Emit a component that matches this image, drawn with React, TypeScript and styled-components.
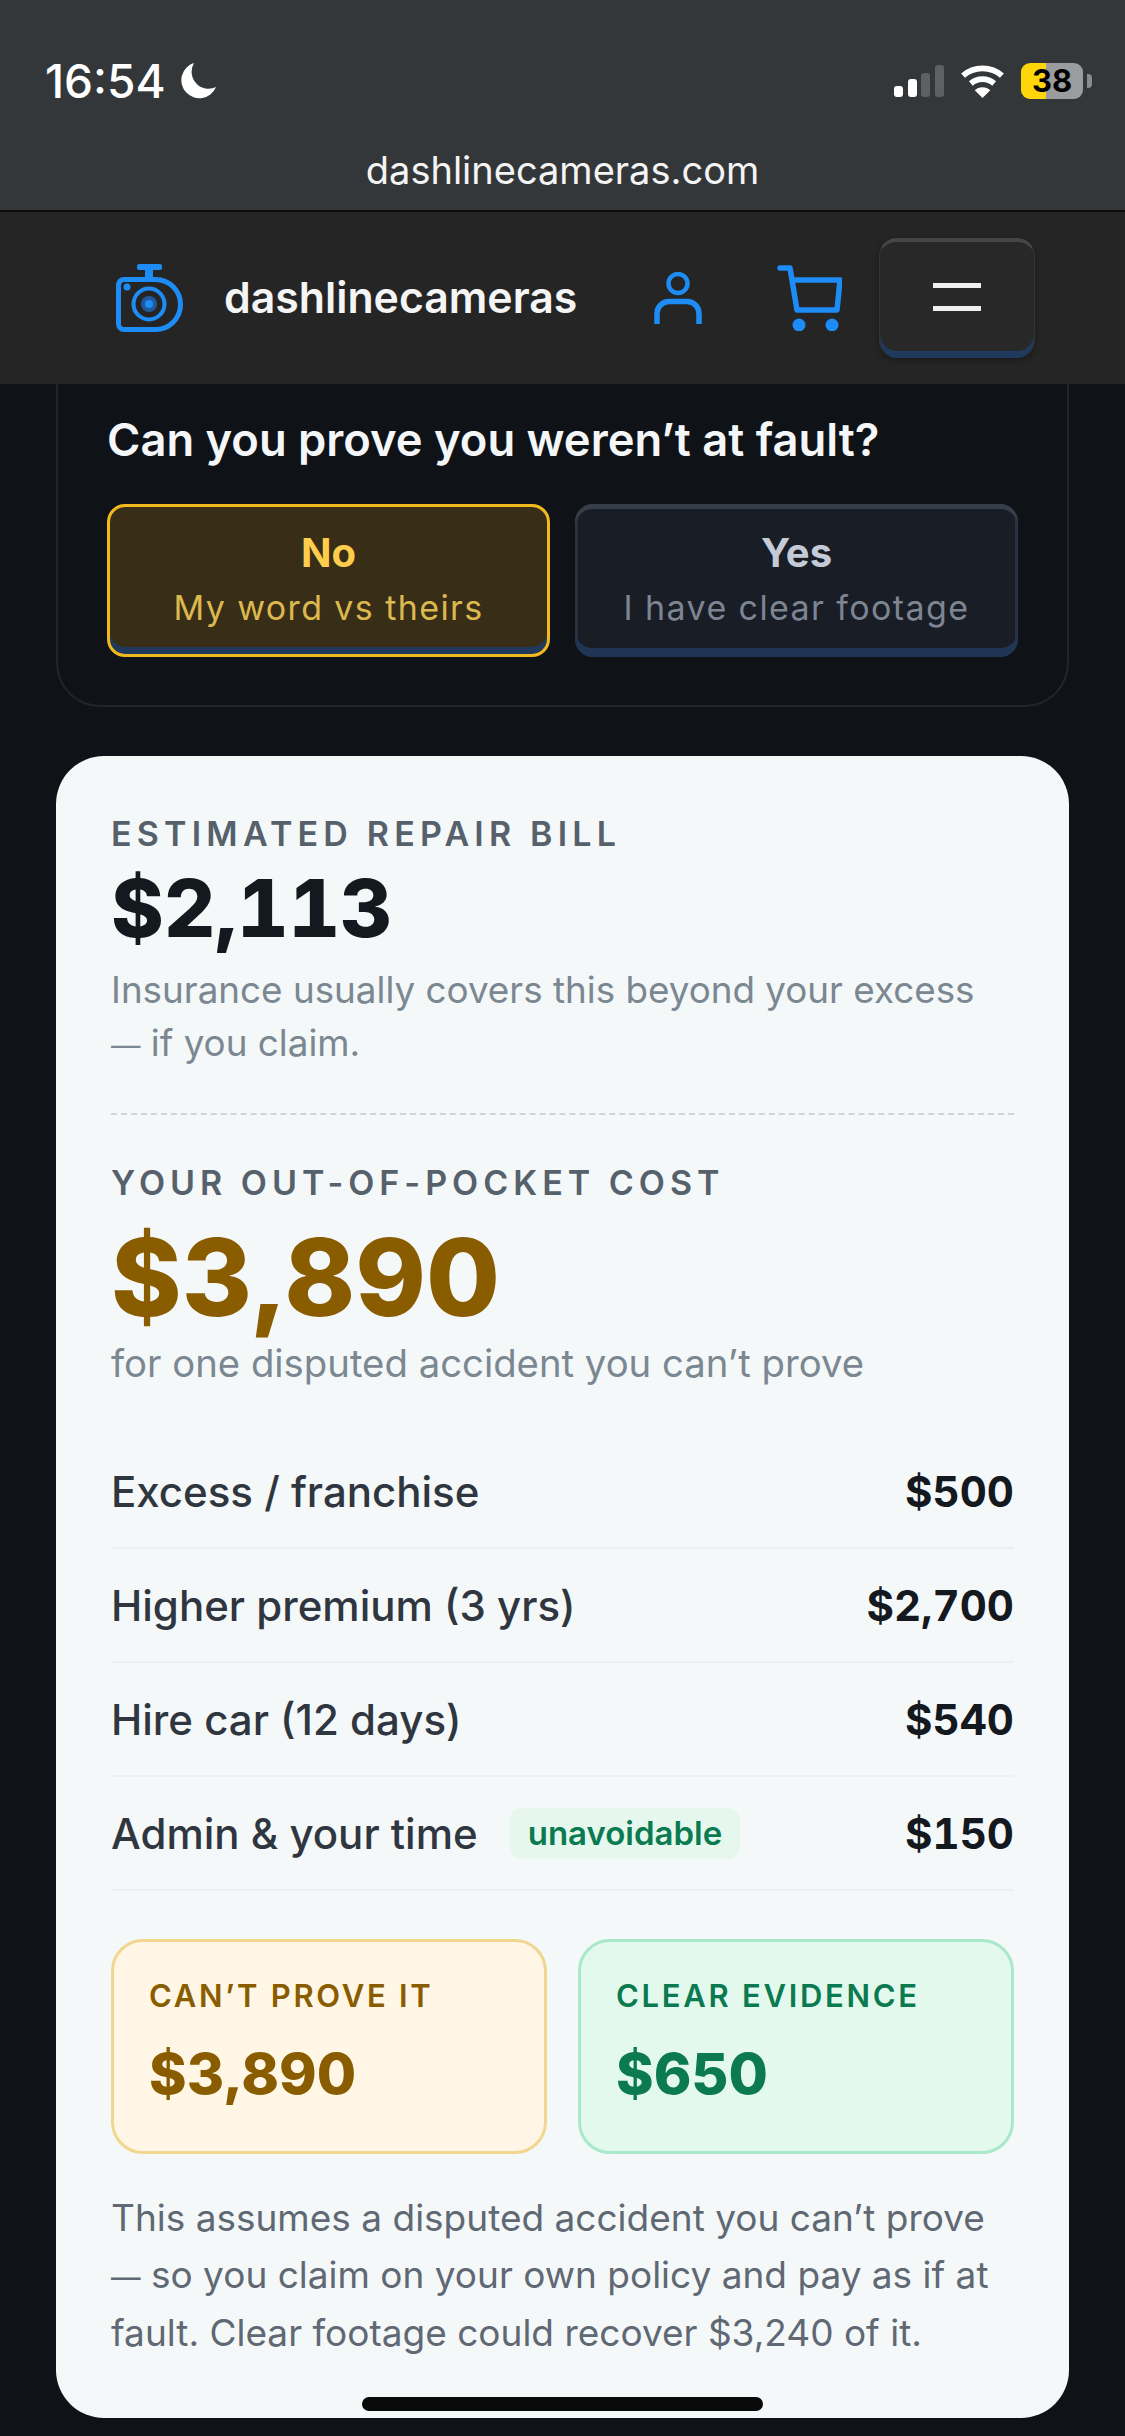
import styled, { createGlobalStyle } from 'styled-components'

const GlobalStyle = createGlobalStyle`
  html, body { margin: 0; padding: 0; background: #0f1318; }
  * { box-sizing: border-box; }
`

const Screen = styled.div`
  position: relative;
  width: 1125px;
  height: 2436px;
  overflow: hidden;
  background: #0f1318;
  font-family: Inter, 'Liberation Sans', sans-serif;
`

const BrowserBar = styled.div`
  height: 212px;
  background: #343739;
  border-bottom: 2px solid #0c0d0e;
  color: #fff;
  padding: 55px 42px 0 45px;
`

const StatusRow = styled.div`
  display: flex;
  align-items: center;
  justify-content: space-between;
  height: 52px;
`

const Clock = styled.div`
  display: flex;
  align-items: center;
  gap: 14px;
  font-size: 46px;
  font-weight: 500;
`

const StatusIcons = styled.div`
  display: flex;
  align-items: center;
  gap: 16px;
`

const Battery = styled.div`
  position: relative;
  width: 62px;
  height: 36px;
  border-radius: 9px;
  background: linear-gradient(90deg, #ffd60a 0 40%, #9b9c9d 40% 100%);
  color: #000;
  font-size: 31px;
  font-weight: 700;
  line-height: 36px;
  text-align: center;
  &::after {
    content: '';
    position: absolute;
    right: -9px;
    top: 11px;
    width: 5px;
    height: 14px;
    border-radius: 0 4px 4px 0;
    background: #8a8b8c;
  }
`

const Domain = styled.div`
  margin: 40px -42px 0 -45px;
  text-align: center;
  font-size: 38px;
  color: #f4f4f4;
`

const NavBar = styled.div`
  height: 172px;
  background: #252525;
  display: flex;
  align-items: center;
  padding: 0 90px 0 116px;
`

const Brand = styled.div`
  flex: 1;
  display: flex;
  align-items: center;
  gap: 41px;
  font-size: 42.8px;
  line-height: 50px;
  font-weight: 600;
  color: #f5f5f5;
`

const NavIcon = styled.div<{ $gap: number }>`
  display: flex;
  margin-right: ${({ $gap }) => $gap}px;
`

const MenuButton = styled.div`
  width: 156px;
  height: 120px;
  border-radius: 18px;
  background: #282828;
  border-top: 4px solid #454647;
  border-left: 1px solid #323334;
  border-right: 1px solid #323334;
  box-shadow: inset 0 -7px 0 #1f3a5c, 0 2px 6px rgba(0, 0, 0, 0.35);
  display: flex;
  flex-direction: column;
  align-items: center;
  justify-content: center;
  gap: 18px;
  padding-bottom: 6px;
`

const MenuLine = styled.span`
  display: block;
  width: 48px;
  height: 5px;
  background: #f0f0f0;
`

const Content = styled.div`
  padding: 0 56px;
`

const QuestionCard = styled.div`
  height: 323px;
  border: 2px solid #20252c;
  border-top: none;
  border-radius: 0 0 44px 44px;
  padding: 30px 49px 0 49px;
`

const Question = styled.div`
  font-size: 45.3px;
  line-height: 52px;
  font-weight: 600;
  color: #f4f6f8;
`

const Choices = styled.div`
  display: grid;
  grid-template-columns: 443px 443px;
  column-gap: 25px;
  margin-top: 38px;
`

const Choice = styled.div<{ $active?: boolean }>`
  height: 153px;
  border-radius: 18px;
  text-align: center;
  padding-top: ${({ $active }) => ($active ? '22px' : '25px')};
  background: ${({ $active }) => ($active ? '#382e17' : '#181d26')};
  border: ${({ $active }) => ($active ? '3px solid #f2b91e' : 'none')};
  box-shadow: ${({ $active }) =>
    $active
      ? 'inset 0 -7px 0 #1f3a5c'
      : 'inset 0 5px 0 #363e49, inset 0 -9px 0 #1f3553, inset 3px 0 0 #2a3240, inset -3px 0 0 #2a3240'};
`

const ChoiceTitle = styled.div<{ $active?: boolean }>`
  font-size: 40px;
  line-height: 48px;
  font-weight: 700;
  color: ${({ $active }) => ($active ? '#ffcd4d' : '#c5cbd6')};
`

const ChoiceSub = styled.div<{ $active?: boolean }>`
  margin-top: 10px;
  font-size: 34px;
  line-height: 42px;
  letter-spacing: 1.4px;
  color: ${({ $active }) => ($active ? '#dcb84e' : '#7d8592')};
`

const ResultCard = styled.div`
  margin-top: 49px;
  height: 1662px;
  background: #f4f8f9;
  border-radius: 48px;
  padding: 57px 55px 0 55px;
`

const Eyebrow = styled.div<{ $spacing: number }>`
  font-size: 34px;
  line-height: 42px;
  font-weight: 600;
  letter-spacing: ${({ $spacing }) => $spacing}px;
  color: #56616c;
`

const RepairAmount = styled.div`
  margin-top: 8px;
  font-size: 80px;
  line-height: 90px;
  font-weight: 800;
  font-variant-numeric: tabular-nums;
  color: #14181f;
`

const Muted = styled.div`
  margin-top: 10px;
  font-size: 36.8px;
  line-height: 53px;
  color: #7b8791;
`

const EmDash = styled.span`
  font-size: 0.8em;
`

const Dashed = styled.div`
  border-top: 2px dashed #cfd5da;
  margin: 41px 0 47px;
`

const BigAmount = styled.div`
  margin-top: 16px;
  font-size: 107px;
  line-height: 114px;
  font-weight: 800;
  color: #8a5c00;
`

const SubNote = styled.div`
  margin-top: 3px;
  font-size: 38.3px;
  line-height: 53px;
  color: #7b8791;
`

const Lines = styled.div`
  margin-top: 45px;
`

const Line = styled.div`
  height: 114px;
  display: flex;
  align-items: center;
  justify-content: space-between;
  border-bottom: 2px solid #ebeff1;
`

const LineLabel = styled.div`
  display: flex;
  align-items: center;
  gap: 32px;
  font-size: 42px;
  font-weight: 500;
  color: #2f3640;
`

const Tag = styled.span`
  background: #e6f8ee;
  color: #0b7a50;
  border-radius: 12px;
  font-size: 33px;
  font-weight: 600;
  line-height: 51px;
  padding: 0 18px;
`

const LineValue = styled.div`
  font-size: 42px;
  font-weight: 700;
  font-variant-numeric: tabular-nums;
  color: #14181f;
`

const Compare = styled.div`
  display: grid;
  grid-template-columns: 436px 436px;
  column-gap: 31px;
  margin-top: 48px;
`

const CompareBox = styled.div<{ $good?: boolean }>`
  height: 215px;
  border-radius: 32px;
  border: 3px solid ${({ $good }) => ($good ? '#a9e8c8' : '#f1d68f')};
  background: ${({ $good }) => ($good ? '#e4f9ee' : '#fff6e5')};
  color: ${({ $good }) => ($good ? '#0b7a50' : '#8a5c00')};
  padding: 34px 35px 0;
`

const CompareLabel = styled.div`
  font-size: 31px;
  line-height: 40px;
  font-weight: 600;
  letter-spacing: 2.7px;
`

const CompareValue = styled.div`
  margin-top: 23px;
  font-size: 57px;
  line-height: 70px;
  font-weight: 800;
`

const Footnote = styled.div`
  margin-top: 36px;
  font-size: 37px;
  line-height: 56.5px;
  color: #5f6873;
`

const HomeIndicator = styled.div`
  position: absolute;
  left: 362px;
  bottom: 25px;
  width: 401px;
  height: 14px;
  border-radius: 7px;
  background: #0a0a0b;
`

const BLUE = '#1e8cf5'

const Moon = () => (
  <svg width="36" height="36" viewBox="0 0 36 36">
    <path d="M14 0a17 17 0 0 0 22 24A18 18 0 1 1 14 0z" fill="#fff" />
  </svg>
)

const Signal = () => (
  <svg width="50" height="32" viewBox="0 0 50 32">
    <rect x="0" y="21" width="9" height="11" rx="3" fill="#fff" />
    <rect x="14" y="14" width="9" height="18" rx="3" fill="#fff" />
    <rect x="27" y="8" width="9" height="24" rx="3" fill="#5e6162" />
    <rect x="41" y="0" width="9" height="32" rx="3" fill="#5e6162" />
  </svg>
)

const Wifi = () => (
  <svg width="45" height="33" viewBox="0 0 46 34" fill="none" stroke="#fff" strokeWidth="6">
    <path d="M3 11c11-10 29-10 40 0" />
    <path d="M11 19c7-6 17-6 24 0" />
    <path d="M23 34l-8-8c4-4 12-4 16 0z" fill="#fff" stroke="none" />
  </svg>
)

const DashCam = () => (
  <svg width="67" height="68" viewBox="0 0 67 68" fill="none">
    <rect x="21" y="0" width="25" height="6" rx="2" fill={BLUE} />
    <rect x="29" y="5" width="8" height="9" fill={BLUE} />
    <path
      d="M8 15.5h31.5a25 25 0 0 1 0 50H8a5.5 5.5 0 0 1-5.5-5.5V21A5.5 5.5 0 0 1 8 15.5z"
      stroke={BLUE}
      strokeWidth="5"
    />
    <circle cx="11" cy="23" r="3.5" fill={BLUE} />
    <circle cx="33" cy="40" r="15.5" stroke={BLUE} strokeWidth="4" />
    <circle cx="33" cy="40" r="8" fill="#1f5a9c" />
    <circle cx="33" cy="40" r="4" fill={BLUE} />
  </svg>
)

const UserIcon = () => (
  <svg width="48" height="52" viewBox="0 0 48 52" fill="none" stroke={BLUE}>
    <circle cx="24" cy="11.5" r="9.5" strokeWidth="4.5" />
    <path d="M3 52V41.5a12 12 0 0 1 12-12h18a12 12 0 0 1 12 12V52" strokeWidth="5.5" />
  </svg>
)

const CartIcon = () => (
  <svg width="65" height="66" viewBox="0 0 65 66" fill="none" stroke={BLUE} strokeWidth="5.5" strokeLinejoin="round" strokeLinecap="round">
    <path d="M3 3h10l7 42h40l3-30H15" />
    <circle cx="22" cy="60" r="6.5" fill={BLUE} stroke="none" />
    <circle cx="55" cy="60" r="6.5" fill={BLUE} stroke="none" />
  </svg>
)

const costLines = [
  { label: 'Excess / franchise', value: '$500' },
  { label: 'Higher premium (3 yrs)', value: '$2,700' },
  { label: 'Hire car (12 days)', value: '$540' },
  { label: 'Admin & your time', value: '$150', tag: 'unavoidable' }
]

export default function App() {
  return (
    <Screen>
      <GlobalStyle />
      <BrowserBar>
        <StatusRow>
          <Clock>
            16:54
            <Moon />
          </Clock>
          <StatusIcons>
            <Signal />
            <Wifi />
            <Battery>38</Battery>
          </StatusIcons>
        </StatusRow>
        <Domain>dashlinecameras.com</Domain>
      </BrowserBar>
      <NavBar>
        <Brand>
          <DashCam />
          dashlinecameras
        </Brand>
        <NavIcon $gap={75}>
          <UserIcon />
        </NavIcon>
        <NavIcon $gap={37}>
          <CartIcon />
        </NavIcon>
        <MenuButton>
          <MenuLine />
          <MenuLine />
        </MenuButton>
      </NavBar>
      <Content>
        <QuestionCard>
          <Question>Can you prove you weren’t at fault?</Question>
          <Choices>
            <Choice $active>
              <ChoiceTitle $active>No</ChoiceTitle>
              <ChoiceSub $active>My word vs theirs</ChoiceSub>
            </Choice>
            <Choice>
              <ChoiceTitle>Yes</ChoiceTitle>
              <ChoiceSub>I have clear footage</ChoiceSub>
            </Choice>
          </Choices>
        </QuestionCard>
        <ResultCard>
          <Eyebrow $spacing={5.2}>ESTIMATED REPAIR BILL</Eyebrow>
          <RepairAmount>$2,113</RepairAmount>
          <Muted>
            Insurance usually covers this beyond your excess <EmDash>—</EmDash> if you claim.
          </Muted>
          <Dashed />
          <Eyebrow $spacing={5}>YOUR OUT-OF-POCKET COST</Eyebrow>
          <BigAmount>$3,890</BigAmount>
          <SubNote>for one disputed accident you can’t prove</SubNote>
          <Lines>
            {costLines.map(line => (
              <Line key={line.label}>
                <LineLabel>
                  {line.label}
                  {line.tag && <Tag>{line.tag}</Tag>}
                </LineLabel>
                <LineValue>{line.value}</LineValue>
              </Line>
            ))}
          </Lines>
          <Compare>
            <CompareBox>
              <CompareLabel>CAN’T PROVE IT</CompareLabel>
              <CompareValue>$3,890</CompareValue>
            </CompareBox>
            <CompareBox $good>
              <CompareLabel>CLEAR EVIDENCE</CompareLabel>
              <CompareValue>$650</CompareValue>
            </CompareBox>
          </Compare>
          <Footnote>
            This assumes a disputed accident you can’t prove <EmDash>—</EmDash> so you claim on your own policy and pay as
            if at fault. Clear footage could recover $3,240 of it.
          </Footnote>
        </ResultCard>
      </Content>
      <HomeIndicator />
    </Screen>
  )
}
